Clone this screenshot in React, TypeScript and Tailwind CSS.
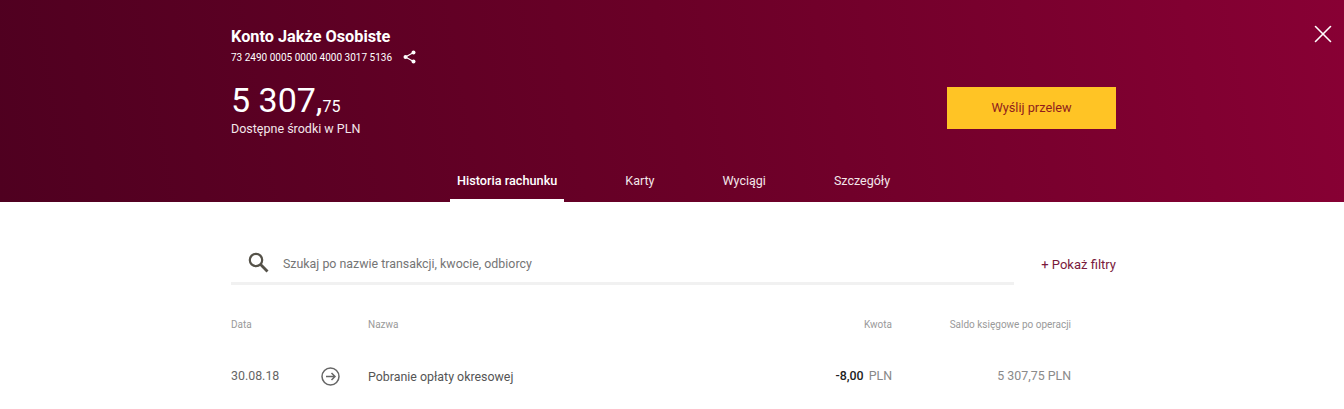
import { X } from 'lucide-react';

const tabs = ['Historia rachunku', 'Karty', 'Wyciągi', 'Szczegóły'];

function ShareIcon() {
  return (
    <svg width="13" height="14" viewBox="0 0 13 14" className="text-white">
      <circle cx="10.5" cy="2.5" r="2" fill="currentColor" />
      <circle cx="2.5" cy="7" r="2" fill="currentColor" />
      <circle cx="10.5" cy="11.5" r="2" fill="currentColor" />
      <path d="M10.5 2.5 2.5 7l8 4.5" fill="none" stroke="currentColor" strokeWidth="1.2" />
    </svg>
  );
}

function SearchIcon() {
  return (
    <svg width="21" height="21" viewBox="0 0 21 21" fill="none" stroke="#555249">
      <circle cx="8" cy="8" r="6.2" strokeWidth="2.2" />
      <path d="M12.6 12.6 19.5 19.5" strokeWidth="2.8" />
    </svg>
  );
}

function ArrowCircle() {
  return (
    <svg width="19" height="19" viewBox="0 0 19 19" fill="none" stroke="#666666" strokeWidth="1.5">
      <circle cx="9.5" cy="9.5" r="8.5" />
      <path d="M5 9.5h9M10.5 6l3.5 3.5-3.5 3.5" />
    </svg>
  );
}

export default function App() {
  return (
    <div className="h-[409px] overflow-hidden bg-white font-['Roboto',sans-serif]">
      <header className="relative h-[202px] bg-[linear-gradient(80deg,#4f0020_0%,#6a0027_50%,#880034_100%)]">
        <button className="absolute right-[6px] top-[19px] text-white">
          <X size={30} strokeWidth={1.3} />
        </button>
        <div className="ml-[231px] w-[885px] pt-[27px]">
          <div className="flex items-end justify-between">
            <div>
              <h1 className="text-[16.3px] font-bold leading-[20px] text-white">Konto Jakże Osobiste</h1>
              <div className="mt-[3px] flex h-[14px] items-center gap-[11px] text-[10px] text-white">
                <span>73 2490 0005 0000 4000 3017 5136</span>
                <ShareIcon />
              </div>
              <div className="mt-[13px] flex h-[46px] items-end leading-none text-white">
                <span className="text-[34px] leading-[46px]">5 307,</span>
                <span className="mb-[8px] text-[16px] leading-none">75</span>
              </div>
              <p className="-mt-[3px] text-[12.5px] leading-[18px] text-[#f3e6ea]">Dostępne środki w PLN</p>
            </div>
            <button className="mb-[9px] h-[42px] w-[169px] bg-[#ffc425] text-[12.75px] text-[#8f1d1d]">Wyślij przelew</button>
          </div>
        </div>
        <nav className="absolute bottom-0 left-[450px] flex gap-[54px]">
          {tabs.map((tab, i) => (
            <div
              key={tab}
              className={
                i === 0
                  ? 'h-[44px] border-b-[3px] border-white px-[7px] pt-[14px] text-[12.7px] font-medium leading-[18px] text-white'
                  : 'h-[44px] px-[7px] pt-[14px] text-[12.5px] leading-[18px] text-[#f3e6ea]'
              }
            >
              {tab}
            </div>
          ))}
        </nav>
      </header>

      <main className="ml-[231px] w-[885px]">
        <div className="mt-[41px] flex items-center justify-between">
          <div className="flex h-[42px] w-[783px] items-center gap-[14px] border-b-[3px] border-[#f1f1f1] pl-[17px] text-[12.4px] text-[#757575]">
            <SearchIcon />
            <span className="mt-[3px]">Szukaj po nazwie transakcji, kwocie, odbiorcy</span>
          </div>
          <a className="mt-[1px] text-[13px] text-[#7a1a3c]">+ Pokaż filtry</a>
        </div>

        <div className="mt-[34px] grid grid-cols-[137px_1fr_180px_179px_45px] text-[10px] leading-[12px] text-[#9a9a9a]">
          <span>Data</span>
          <span>Nazwa</span>
          <span className="text-right">Kwota</span>
          <span className="text-right">Saldo księgowe po operacji</span>
        </div>

        <div className="mt-[34px] grid grid-cols-[90px_47px_1fr_180px_179px_45px] items-center text-[12.4px] leading-[20px]">
          <span className="text-[#666666]">30.08.18</span>
          <ArrowCircle />
          <span className="mt-[2px] text-[#555555]">Pobranie opłaty okresowej</span>
          <span className="text-right text-[#888888]">
            <span className="mr-[2px] font-medium text-[#222222]">-8,00</span> PLN
          </span>
          <span className="text-right text-[#8a8a8a]">5 307,75 PLN</span>
        </div>
      </main>
    </div>
  );
}
